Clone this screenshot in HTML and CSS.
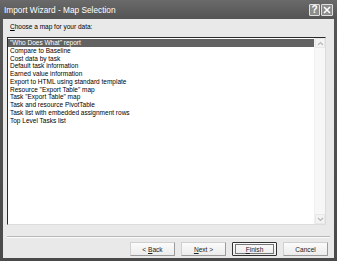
FILE: index.html
```html
<!DOCTYPE html>
<html>
<head>
<meta charset="utf-8">
<link rel="stylesheet" href="styles.css">
</head>
<body>
<div class="window">
  <div class="titlebar">
    <span class="title">Import Wizard - Map Selection</span>
    <div class="tbtns">
      <span class="tbtn help">?</span>
      <span class="tbtn close"><svg width="8" height="8" viewBox="0 0 8 8"><path d="M1 1L7 7M7 1L1 7" stroke="#fff" stroke-width="1.6"/></svg></span>
    </div>
  </div>
  <div class="body">
    <div class="prompt"><u>C</u>hoose a map for your data:</div>
    <div class="listbox">
      <ul class="items">
        <li class="sel">"Who Does What" report</li>
        <li>Compare to Baseline</li>
        <li>Cost data by task</li>
        <li>Default task information</li>
        <li>Earned value information</li>
        <li>Export to HTML using standard template</li>
        <li>Resource "Export Table" map</li>
        <li>Task "Export Table" map</li>
        <li>Task and resource PivotTable</li>
        <li>Task list with embedded assignment rows</li>
        <li>Top Level Tasks list</li>
      </ul>
      <div class="scroll">
        <div class="arrow"><svg width="7" height="5" viewBox="0 0 7 5"><path d="M1 4L3.5 1.5L6 4" fill="none" stroke="#b8b8b8" stroke-width="1.2"/></svg></div>
        <div class="track"></div>
        <div class="arrow"><svg width="7" height="5" viewBox="0 0 7 5"><path d="M1 1L3.5 3.5L6 1" fill="none" stroke="#b8b8b8" stroke-width="1.2"/></svg></div>
      </div>
    </div>
    <div class="sep"></div>
    <div class="buttons">
      <button class="btn">&lt;&nbsp;<u>B</u>ack</button>
      <button class="btn"><u>N</u>ext&nbsp;&gt;</button>
      <button class="btn default"><span class="focus"><u>F</u>inish</span></button>
      <button class="btn">Cancel</button>
    </div>
  </div>
</div>
</body>
</html>
```

FILE: styles.css
```css
html, body {
  margin: 0;
  padding: 0;
  background: #3a3a3a;
}
.window {
  width: 337px;
  height: 261px;
  box-sizing: border-box;
  padding: 0 3px 3px 3px;
  background: linear-gradient(#6a6a6a, #555 18px, #4a4a4a);
  display: flex;
  flex-direction: column;
  font-family: "Liberation Sans", Arial, sans-serif;
}
.titlebar {
  height: 19px;
  display: flex;
  align-items: center;
  justify-content: space-between;
  flex: none;
}
.title {
  color: #fff;
  font-size: 8.3px;
  padding-left: 1px;
}
.tbtns {
  display: flex;
  gap: 1px;
  padding-right: 1px;
}
.tbtn {
  width: 11px;
  height: 12px;
  box-sizing: border-box;
  border: 1px solid #e0e0e0;
  border-radius: 1px;
  background: #8c8c8c;
  color: #fff;
  font-size: 10px;
  font-weight: bold;
  display: flex;
  align-items: center;
  justify-content: center;
  line-height: 1;
}
.close { width: 12px; }
.body {
  flex: 1;
  background: #e9e9e9;
  display: flex;
  flex-direction: column;
  font-size: 6.5px;
  color: #000;
}
.prompt {
  margin: 4px 0 0 7px;
  line-height: 8px;
  height: 8px;
}
.listbox {
  margin: 6px 0 0 4px;
  width: 319px;
  height: 188px;
  box-sizing: border-box;
  border: 1px solid #dcdcdc;
  border-top-color: #2a2a2a;
  border-left-color: #2a2a2a;
  background: #fff;
  display: flex;
}
.items {
  list-style: none;
  margin: 0;
  padding: 1px 0 0 0;
  flex: 1;
}
.items li {
  height: 7.75px;
  line-height: 7.75px;
  padding-left: 2px;
  white-space: nowrap;
}
.items li.sel {
  background: #626262;
  color: #fff;
}
.scroll {
  width: 10px;
  background: #f7f7f7;
  border-left: 1px solid #f0f0f0;
  display: flex;
  flex-direction: column;
}
.arrow {
  height: 10px;
  display: flex;
  align-items: center;
  justify-content: center;
  background: #f3f3f3;
  border: 1px solid #e8e8e8;
  box-sizing: border-box;
}
.track { flex: 1; }
.sep {
  margin: 11px 4px 0 4px;
  height: 0;
  border-top: 1px solid #b8b8b8;
  border-bottom: 1px solid #fafafa;
}
.buttons {
  margin: 4px 6px 0 0;
  display: flex;
  justify-content: flex-end;
  gap: 6px;
}
.btn {
  width: 45px;
  height: 14px;
  box-sizing: border-box;
  margin: 0;
  padding: 0;
  font-family: "Liberation Sans", Arial, sans-serif;
  font-size: 6.6px;
  color: #222;
  background: linear-gradient(#fbfbfb, #ececec);
  border: 1px solid #d0d0d0;
  border-right-color: #9a9a9a;
  border-bottom-color: #9a9a9a;
  border-radius: 1px;
  display: flex;
  align-items: center;
  justify-content: center;
}
.btn.default {
  border: 1px solid #333;
}
.focus {
  display: flex;
  align-items: center;
  justify-content: center;
  width: 37px;
  height: 8px;
  border: 1px solid #777;
}
```
